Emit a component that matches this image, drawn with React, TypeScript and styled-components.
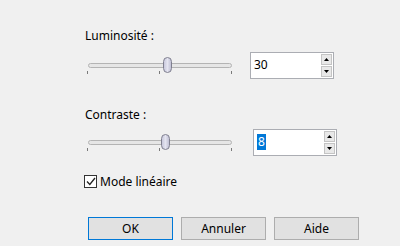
import styled, { createGlobalStyle } from "styled-components";

const GlobalStyle = createGlobalStyle`
  html, body {
    margin: 0;
    padding: 0;
    background: #f0f0f0;
  }
  body {
    width: 400px;
    height: 246px;
    overflow: hidden;
    font-family: "Noto Sans", "Segoe UI", sans-serif;
    font-size: 12px;
    color: #000;
  }
`;

const Page = styled.div`
  display: flex;
  flex-direction: column;
  padding: 28px 0 0 85px;
`;

const Label = styled.div<{ $top: number }>`
  margin-top: ${({ $top }) => $top}px;
  height: 16px;
  line-height: 16px;
`;

const Row = styled.div<{ $top: number }>`
  display: flex;
  align-items: flex-start;
  margin-top: ${({ $top }) => $top}px;
`;

const Slider = styled.div`
  position: relative;
  width: 148px;
  height: 26px;
  margin-left: 1px;
`;

const Track = styled.div`
  position: absolute;
  left: 2px;
  right: 2px;
  top: 11px;
  height: 3px;
  border: 1px solid #b4b4b4;
  border-radius: 3px;
  background: #e6e6e6;
`;

const Tick = styled.div<{ $x: number }>`
  position: absolute;
  top: 19px;
  left: ${({ $x }) => $x}px;
  width: 1px;
  height: 3px;
  background: #7a7a7a;
`;

const Thumb = styled.div<{ $x: number }>`
  position: absolute;
  top: 5px;
  left: ${({ $x }) => $x}px;
  width: 7px;
  height: 14px;
  border: 1px solid #7f7f8f;
  border-radius: 5px;
  background: linear-gradient(to right, #c8c8dc, #e4e4f0 50%, #c0c0d4);
`;

const Spin = styled.div<{ $left: number }>`
  display: flex;
  justify-content: space-between;
  width: 82px;
  height: 25px;
  margin-left: ${({ $left }) => $left}px;
  border: 1px solid #abadb3;
  background: #fff;
`;

const SpinText = styled.div`
  padding: 4px 0 0 3px;
  line-height: 16px;
`;

const Selected = styled.span`
  display: inline-block;
  padding: 0 1px;
  background: #0078d7;
  color: #fff;
`;

const SpinButtons = styled.div`
  display: flex;
  flex-direction: column;
  gap: 1px;
  padding: 1px 1px 1px 0;
`;

const SpinButton = styled.div`
  display: flex;
  align-items: center;
  justify-content: center;
  width: 9px;
  height: 10px;
  border: 1px solid #c4c4c4;
  background: #e8e8e8;
`;

const CheckRow = styled.label`
  display: flex;
  align-items: center;
  gap: 3px;
  margin-top: 18px;
  margin-left: -1px;
  height: 14px;
`;

const Box = styled.div`
  width: 11px;
  height: 11px;
  border: 1px solid #333;
  background: #fff;
  display: flex;
  align-items: center;
  justify-content: center;
`;

const Buttons = styled.div`
  display: flex;
  gap: 8px;
  margin: 29px 0 0 3px;
`;

const Button = styled.div<{ $default?: boolean }>`
  width: 83px;
  height: 21px;
  line-height: 21px;
  text-align: center;
  background: #e1e1e1;
  border: 1px solid ${({ $default }) => ($default ? "#0078d7" : "#adadad")};
`;

const Arrow = ({ up }: { up?: boolean }) => (
  <svg width="5" height="3" viewBox="0 0 5 3">
    <path d={up ? "M0 3 L2.5 0 L5 3 Z" : "M0 0 L5 0 L2.5 3 Z"} fill="#000" />
  </svg>
);

const TrackBar = ({ thumb }: { thumb: number }) => (
  <Slider>
    <Track />
    <Tick $x={1} />
    <Tick $x={73} />
    <Tick $x={145} />
    <Thumb $x={thumb} />
  </Slider>
);

const SpinBox = ({ left, children }: { left: number; children: React.ReactNode }) => (
  <Spin $left={left}>
    <SpinText>{children}</SpinText>
    <SpinButtons>
      <SpinButton>
        <Arrow up />
      </SpinButton>
      <SpinButton>
        <Arrow />
      </SpinButton>
    </SpinButtons>
  </Spin>
);

export default function App() {
  return (
    <>
      <GlobalStyle />
      <Page>
        <Label $top={0}>Luminosité :</Label>
        <Row $top={8}>
          <TrackBar thumb={77} />
          <SpinBox left={16}>30</SpinBox>
        </Row>

        <Label $top={28}>Contraste :</Label>
        <Row $top={6}>
          <TrackBar thumb={75} />
          <SpinBox left={19}>
            <Selected>8</Selected>
          </SpinBox>
        </Row>

        <CheckRow>
          <Box>
            <svg width="10" height="9" viewBox="0 0 10 9">
              <path d="M1 4.5 L3.8 7.5 L9 1" stroke="#222" strokeWidth="1.3" fill="none" />
            </svg>
          </Box>
          Mode linéaire
        </CheckRow>

        <Buttons>
          <Button $default>OK</Button>
          <Button>Annuler</Button>
          <Button>Aide</Button>
        </Buttons>
      </Page>
    </>
  );
}
